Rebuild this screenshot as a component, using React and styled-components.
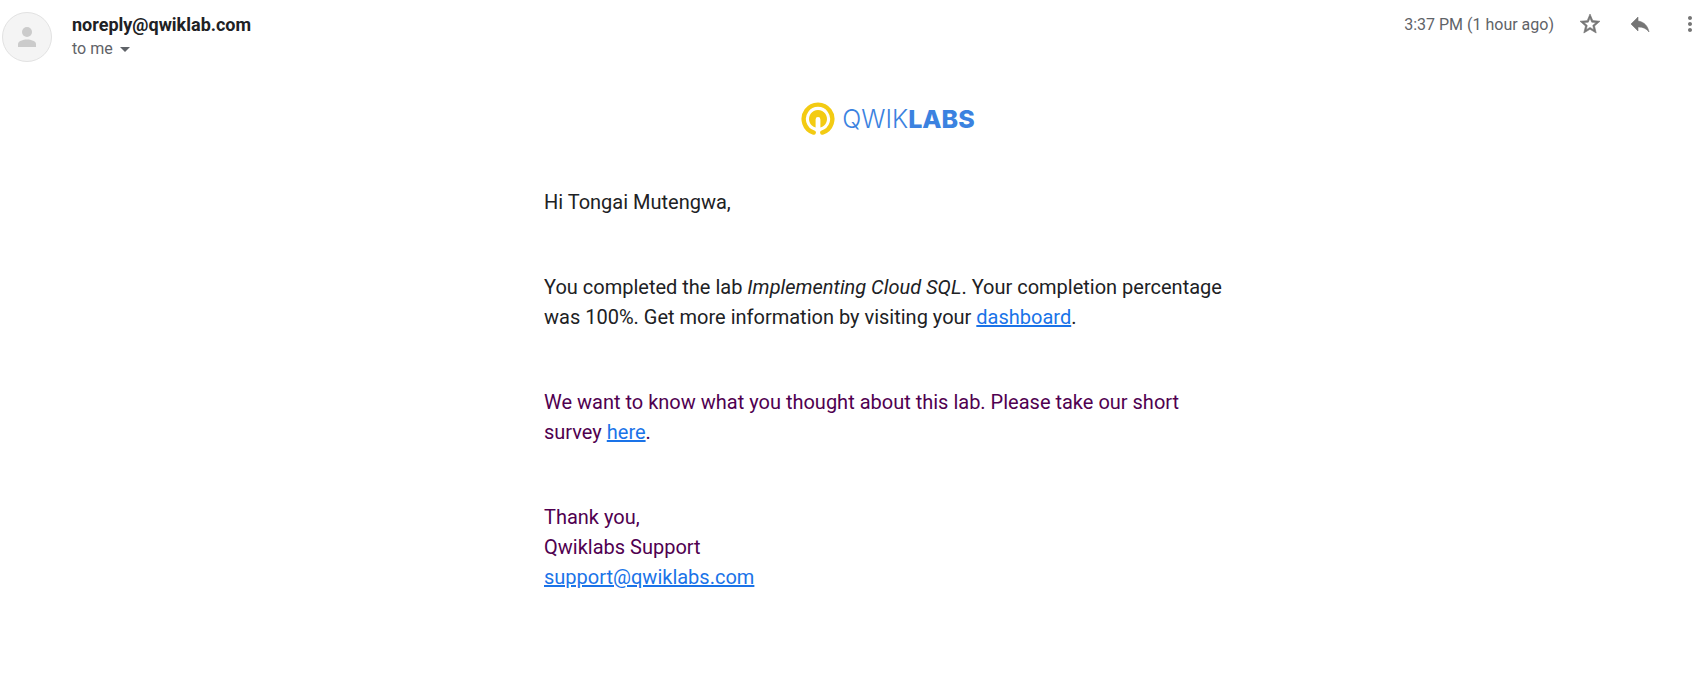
import React from "react";
import styled, { createGlobalStyle } from "styled-components";

const GlobalStyle = createGlobalStyle`
  * { box-sizing: border-box; }
  body {
    margin: 0;
    background: #fff;
    color: #202124;
    font-family: Roboto, Arial, sans-serif;
  }
`;

const Message = styled.article`
  display: flex;
  flex-direction: column;
`;

const Header = styled.header`
  display: flex;
  align-items: flex-start;
  padding: 12px 2px 0;
`;

const Avatar = styled.div`
  display: flex;
  align-items: center;
  justify-content: center;
  width: 50px;
  height: 50px;
  border: 1px solid #e2e2e2;
  border-radius: 50%;
  background: #f4f4f4;
`;

const Sender = styled.div`
  flex: 1;
  padding-left: 20px;
`;

const Address = styled.h1`
  margin: 0;
  font-size: 18px;
  font-weight: 700;
  line-height: 26px;
`;

const Recipient = styled.button`
  display: flex;
  align-items: center;
  gap: 7px;
  padding: 0;
  border: 0;
  background: none;
  color: #5f6368;
  font: 16px/22px Roboto, Arial, sans-serif;
`;

const Tools = styled.div`
  display: flex;
  align-items: center;
  height: 24px;
`;

const Time = styled.time`
  margin-right: 24px;
  padding-top: 2px;
  color: #5f6368;
  font-size: 16px;
  line-height: 22px;
`;

const IconButton = styled.button`
  display: flex;
  margin-right: ${(p) => (p.$last ? "0" : "26px")};
  padding: 0;
  border: 0;
  background: none;
  color: #757575;
`;

const Body = styled.main`
  width: 100%;
  padding: 40px 0 55px 72px;
`;

const Letter = styled.div`
  max-width: 688px;
  margin: 0 auto;
  font-size: 20px;
  line-height: 30px;
`;

const Logo = styled.div`
  display: flex;
  align-items: center;
  justify-content: center;
  gap: 7px;
  height: 34px;
  margin-bottom: 51px;
  color: #3b82e0;
  font: 300 25px/34px Inter, sans-serif;

  strong { font-weight: 800; }
`;

const Paragraph = styled.p`
  margin: 0 0 55px;
  color: ${(p) => (p.$quoted ? "#500050" : "#202124")};
`;

const Link = styled.a`
  color: #1a73e8;
`;

const Icon = ({ size = 24, weight = 0, d }) => (
  <svg
    width={size}
    height={size}
    viewBox="0 0 24 24"
    fill="currentColor"
    stroke="currentColor"
    strokeWidth={weight}
    aria-hidden="true"
  >
    <path d={d} />
  </svg>
);

const QwiklabsMark = () => (
  <svg width="34" height="34" viewBox="0 0 34 34" fill="none" aria-hidden="true">
    <path d="M12.7 30.600A14.3 14.3 0 1 1 21.3 30.600" stroke="#f3cb13" strokeWidth="4.4" strokeLinecap="round" />
    <path
      d="M14.6 25.600A9 9 0 1 1 19.4 25.600V17.500A2.4 2.4 0 0 0 14.6 17.500Z"
      fill="#f3cb13"
    />
  </svg>
);

export default function App() {
  return (
    <>
      <GlobalStyle />
      <Message>
        <Header>
          <Avatar>
            <svg width="20" height="22" viewBox="0 0 20 22" fill="#cbcbcb" aria-hidden="true">
              <circle cx="10" cy="6" r="5" />
              <path d="M1 21v-3c0-3 5-4.500 9-4.500s9 1.500 9 4.500v3z" />
            </svg>
          </Avatar>
          <Sender>
            <Address>noreply@qwiklab.com</Address>
            <Recipient type="button">
              to me
              <svg width="10" height="5" viewBox="0 0 10 5" fill="#5f6368" aria-hidden="true">
                <path d="M0 0h10L5 5z" />
              </svg>
            </Recipient>
          </Sender>
          <Tools>
            <Time>3:37 PM (1 hour ago)</Time>
            <IconButton type="button" aria-label="Star">
              <Icon
                size={24}
                weight={0.6}
                d="M22 9.240l-7.190-.620L12 2 9.190 8.630 2 9.240l5.460 4.730L5.820 21 12 17.270 18.180 21l-1.630-7.030L22 9.240zM12 15.400l-3.760 2.270 1-4.280-3.320-2.880 4.380-.380L12 6.100l1.710 4.040 4.380.380-3.320 2.880 1 4.280L12 15.400z"
              />
            </IconButton>
            <IconButton type="button" aria-label="Reply">
              <Icon size={24} weight={0.6} d="M10 9V5l-7 7 7 7v-4.100c5 0 8.500 1.600 11 5.100-1-5-4-10-11-11z" />
            </IconButton>
            <IconButton type="button" aria-label="More" $last>
              <Icon
                size={24}
                d="M12 8c1.100 0 2-.900 2-2s-.900-2-2-2-2 .900-2 2 .900 2 2 2zm0 2c-1.100 0-2 .900-2 2s.900 2 2 2 2-.900 2-2-.900-2-2-2zm0 6c-1.100 0-2 .900-2 2s.900 2 2 2 2-.900 2-2-.900-2-2-2z"
              />
            </IconButton>
          </Tools>
        </Header>
        <Body>
          <Letter>
            <Logo>
              <QwiklabsMark />
              <span>QWIK<strong>LABS</strong></span>
            </Logo>
            <Paragraph>Hi Tongai Mutengwa,</Paragraph>
            <Paragraph>
              You completed the lab <em>Implementing Cloud SQL</em>. Your completion percentage
              was 100%. Get more information by visiting your <Link href="#dashboard">dashboard</Link>.
            </Paragraph>
            <Paragraph $quoted>
              We want to know what you thought about this lab. Please take our short
              survey <Link href="#survey">here</Link>.
            </Paragraph>
            <Paragraph $quoted>
              Thank you,
              <br />
              Qwiklabs Support
              <br />
              <Link href="mailto:support@qwiklabs.com">support@qwiklabs.com</Link>
            </Paragraph>
          </Letter>
        </Body>
      </Message>
    </>
  );
}
